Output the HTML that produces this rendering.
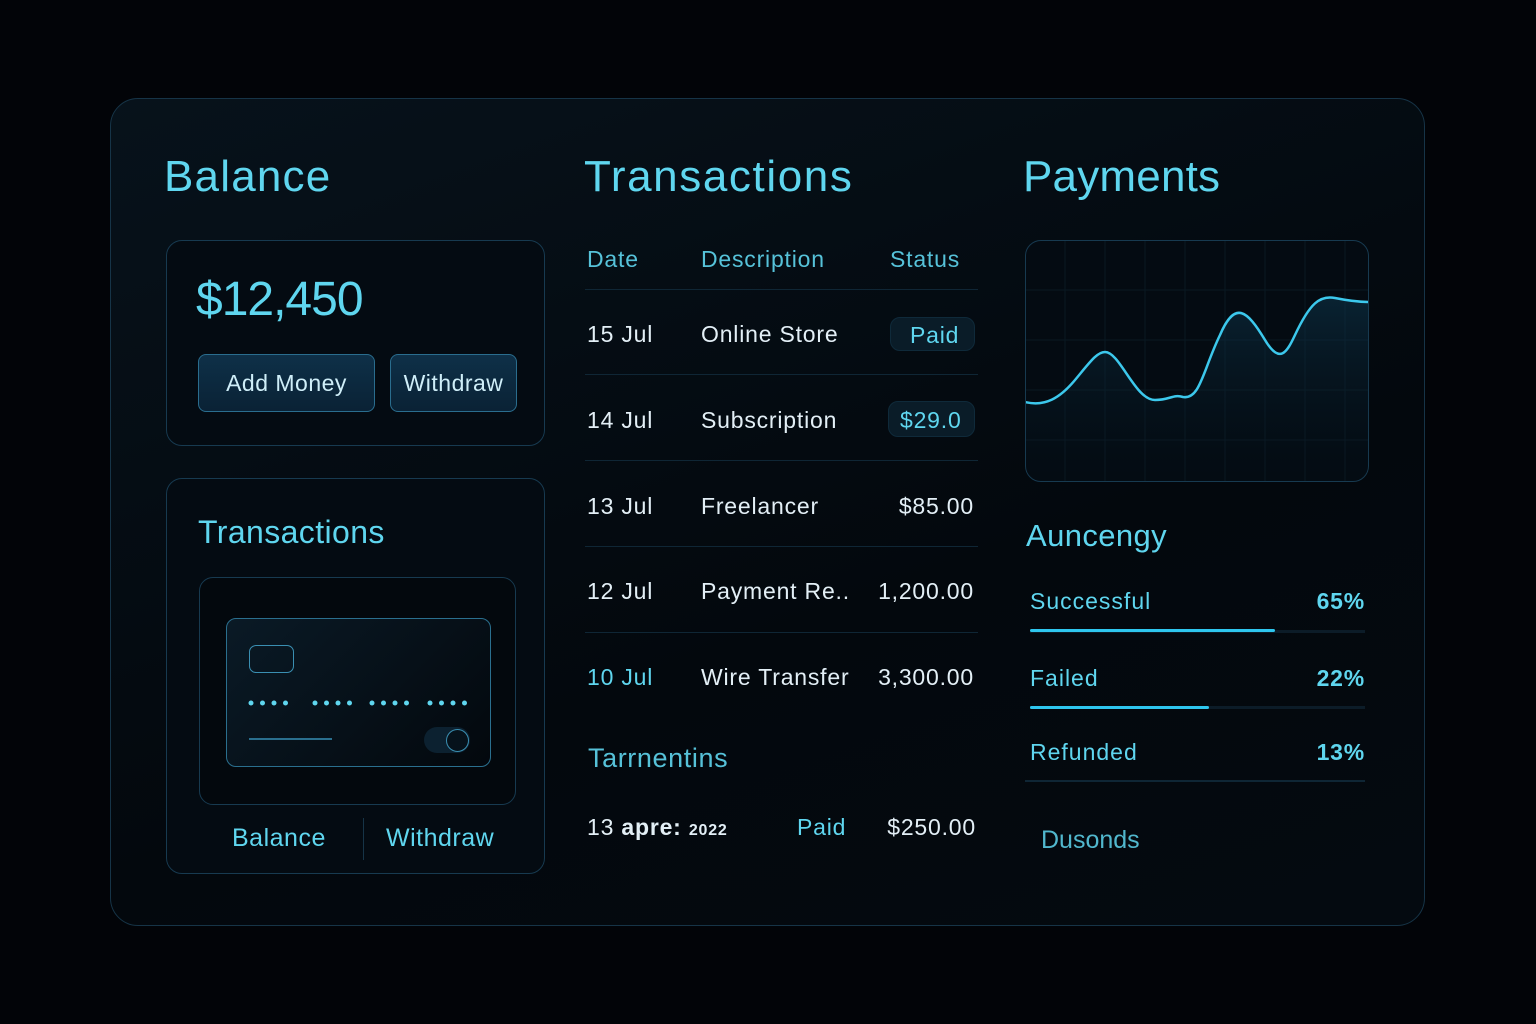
<!DOCTYPE html>
<html><head><meta charset="utf-8"><style>
*{margin:0;padding:0;box-sizing:border-box}
body{width:1536px;height:1024px;background:#020408;font-family:"Liberation Sans",sans-serif;position:relative;overflow:hidden}
.a{position:absolute;white-space:nowrap}
.r{position:absolute;white-space:nowrap;text-align:right}
.frame{position:absolute;left:110px;top:98px;width:1315px;height:828px;border:1px solid #163447;border-radius:28px;background:linear-gradient(160deg,#07121b,#03080d 60%,#040a10)}
.box{position:absolute;border:1.5px solid #173a50;border-radius:16px;background:#040b12}
.c{color:#5fd6ef}.w{color:#e3eff6}
.h1{font-size:44px;letter-spacing:1.2px}
.btn{position:absolute;border:1.5px solid #2a6d8e;border-radius:8px;background:linear-gradient(180deg,#0e3048,#0a2235);color:#cfeef8;font-size:23px;text-align:center;line-height:56px;letter-spacing:.5px}
.t{font-size:23px;letter-spacing:.8px}
.line{position:absolute;height:1px;background:#0f2635}
</style></head><body>
<div class="frame"></div>
<div class="a c h1" style="left:164px;top:152px">Balance</div>
<div class="a c h1" style="left:584px;top:152px;letter-spacing:1.6px">Transactions</div>
<div class="a c h1" style="left:1023px;top:152px;letter-spacing:.2px">Payments</div>

<div class="box" style="left:166px;top:240px;width:379px;height:206px"></div>
<div class="a c" style="left:196px;top:272px;font-size:48px;letter-spacing:-1px">$12,450</div>
<div class="btn" style="left:198px;top:354px;width:177px;height:58px">Add Money</div>
<div class="btn" style="left:390px;top:354px;width:127px;height:58px">Withdraw</div>

<div class="box" style="left:166px;top:478px;width:379px;height:396px"></div>
<div class="a c" style="left:198px;top:514px;font-size:32px;letter-spacing:.4px">Transactions</div>
<div class="box" style="left:199px;top:577px;width:317px;height:228px;border-radius:14px;background:#03080d"></div>
<div class="box" style="left:226px;top:618px;width:265px;height:149px;border-radius:10px;border-color:#2a6f8e;background:linear-gradient(135deg,#0a1a26,#03080d)"></div>
<div class="a" style="left:249px;top:645px;width:45px;height:28px;border:1.5px solid #3a8fb2;border-radius:7px"></div>
<svg class="a" style="left:245px;top:697px" width="230" height="12" fill="#5fd6ef">
<g><circle cx="6" cy="6" r="2.5"/><circle cx="17.5" cy="6" r="2.5"/><circle cx="29" cy="6" r="2.5"/><circle cx="40.5" cy="6" r="2.5"/></g>
<g transform="translate(64 0)"><circle cx="6" cy="6" r="2.5"/><circle cx="17.5" cy="6" r="2.5"/><circle cx="29" cy="6" r="2.5"/><circle cx="40.5" cy="6" r="2.5"/></g>
<g transform="translate(121 0)"><circle cx="6" cy="6" r="2.5"/><circle cx="17.5" cy="6" r="2.5"/><circle cx="29" cy="6" r="2.5"/><circle cx="40.5" cy="6" r="2.5"/></g>
<g transform="translate(179 0)"><circle cx="6" cy="6" r="2.5"/><circle cx="17.5" cy="6" r="2.5"/><circle cx="29" cy="6" r="2.5"/><circle cx="40.5" cy="6" r="2.5"/></g>
</svg>
<div class="a" style="left:249px;top:738px;width:83px;height:2px;background:#2a6f8e"></div>
<div class="a" style="left:424px;top:727px;width:46px;height:26px;border-radius:13px;background:#0c2130"></div>
<div class="a" style="left:446px;top:729px;width:23px;height:23px;border-radius:50%;border:1.5px solid #3a8fb2;background:#06121b"></div>
<div class="a c" style="left:232px;top:824px;font-size:25px;letter-spacing:.5px">Balance</div>
<div class="a" style="left:363px;top:818px;width:1px;height:42px;background:#163447"></div>
<div class="a c" style="left:386px;top:824px;font-size:25px;letter-spacing:.5px">Withdraw</div>

<div class="a c t" style="left:587px;top:246px;opacity:.9">Date</div>
<div class="a c t" style="left:701px;top:246px;opacity:.9">Description</div>
<div class="a c t" style="left:890px;top:246px;opacity:.9">Status</div>
<div class="line" style="left:585px;top:289px;width:393px"></div>
<div class="line" style="left:585px;top:374px;width:393px"></div>
<div class="line" style="left:585px;top:460px;width:393px"></div>
<div class="line" style="left:585px;top:546px;width:393px"></div>
<div class="line" style="left:585px;top:632px;width:393px"></div>
<div class="a w t" style="left:587px;top:321px">15 Jul</div><div class="a w t" style="left:701px;top:321px">Online Store</div>
<div class="a" style="left:890px;top:317px;width:85px;height:34px;border-radius:10px;background:#0a1c28;border:1px solid #0f2a3a"></div>
<div class="a c t" style="left:910px;top:322px">Paid</div>
<div class="a w t" style="left:587px;top:407px">14 Jul</div><div class="a w t" style="left:701px;top:407px">Subscription</div>
<div class="a" style="left:888px;top:401px;width:87px;height:36px;border-radius:10px;background:#0a1c28;border:1px solid #0f2a3a"></div>
<div class="a c t" style="left:900px;top:407px">$29.0</div>
<div class="a w t" style="left:587px;top:493px">13 Jul</div><div class="a w t" style="left:701px;top:493px">Freelancer</div><div class="r w t" style="right:562px;top:493px">$85.00</div>
<div class="a w t" style="left:587px;top:578px">12 Jul</div><div class="a w t" style="left:701px;top:578px">Payment Re..</div><div class="r w t" style="right:562px;top:578px">1,200.00</div>
<div class="a c t" style="left:587px;top:664px">10 Jul</div><div class="a w t" style="left:701px;top:664px">Wire Transfer</div><div class="r w t" style="right:562px;top:664px">3,300.00</div>
<div class="a c" style="left:588px;top:743px;font-size:27px;opacity:.9;letter-spacing:.6px">Tarrnentins</div>
<div class="a w t" style="left:587px;top:814px">13 <b>apre:</b> <b style="font-size:16px">2022</b></div>
<div class="a c t" style="left:797px;top:814px">Paid</div>
<div class="r w t" style="right:560px;top:814px">$250.00</div>

<div class="box" style="left:1025px;top:240px;width:344px;height:242px;overflow:hidden;background:#040b12">
<svg width="344" height="242" style="position:absolute;left:-1.5px;top:-1.5px">
<g stroke="#0a1822" stroke-width="1">
<path d="M0 50H344M0 100H344M0 150H344M0 200H344M40 0V242M80 0V242M120 0V242M160 0V242M200 0V242M240 0V242M280 0V242M320 0V242"/></g>
<defs><linearGradient id="g" x1="0" y1="0" x2="0" y2="1"><stop offset="0" stop-color="#0e3a52" stop-opacity=".5"/><stop offset="1" stop-color="#04111a" stop-opacity=".1"/></linearGradient></defs>
<path d="M0 162C20 167 35 158 50 140C65 122 72 112 80 112C95 112 110 160 130 160C145 160 148 154 158 157C175 160 178 130 195 95C210 60 222 70 240 100C255 125 262 112 270 95C285 63 295 55 310 58C325 61 335 62 344 62L344 242L0 242Z" fill="url(#g)"/>
<path d="M0 162C20 167 35 158 50 140C65 122 72 112 80 112C95 112 110 160 130 160C145 160 148 154 158 157C175 160 178 130 195 95C210 60 222 70 240 100C255 125 262 112 270 95C285 63 295 55 310 58C325 61 335 62 344 62" fill="none" stroke="#3cc8ec" stroke-width="2.5"/>
</svg></div>

<div class="a c" style="left:1026px;top:518px;font-size:31px;letter-spacing:.4px">Auncengy</div>
<div class="a c t" style="left:1030px;top:588px;letter-spacing:1px">Successful</div><div class="r c t" style="right:171px;top:588px;font-weight:bold">65%</div>
<div class="line" style="left:1030px;top:630px;width:335px;height:3px;background:#0c1c28"></div>
<div class="a" style="left:1030px;top:629px;width:245px;height:3px;background:#2ec6ee;border-radius:2px"></div>
<div class="a c t" style="left:1030px;top:665px;letter-spacing:1px">Failed</div><div class="r c t" style="right:171px;top:665px;font-weight:bold">22%</div>
<div class="line" style="left:1030px;top:706px;width:335px;height:3px;background:#0c1c28"></div>
<div class="a" style="left:1030px;top:706px;width:179px;height:3px;background:#2ec6ee;border-radius:2px"></div>
<div class="a c t" style="left:1030px;top:739px;letter-spacing:1px">Refunded</div><div class="r c t" style="right:171px;top:739px;font-weight:bold">13%</div>
<div class="line" style="left:1025px;top:780px;width:340px;height:2px"></div>
<div class="a c" style="left:1041px;top:826px;font-size:25px;opacity:.85">Dusonds</div>
</body></html>
